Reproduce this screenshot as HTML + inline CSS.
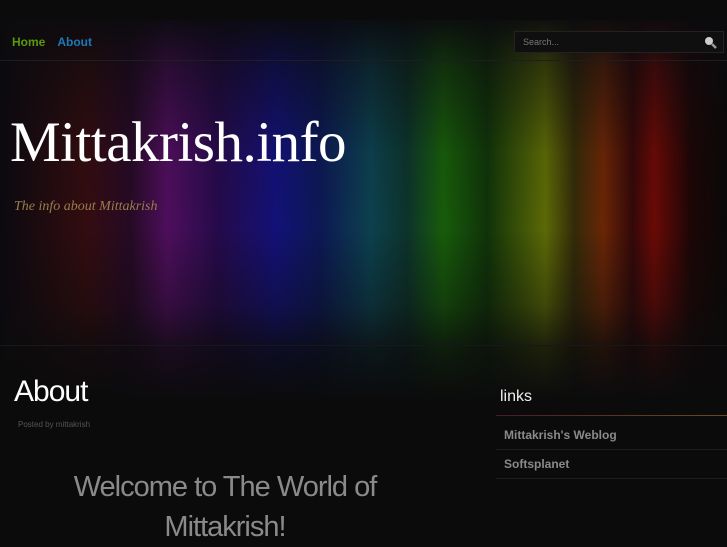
<!DOCTYPE html>
<html><head><meta charset="utf-8"><style>
html,body{margin:0;padding:0}
body{width:727px;height:545px;overflow:hidden;background:#0b0b0c;position:relative;font-family:"Liberation Sans",sans-serif}
.bg{position:absolute;left:0;top:20px;width:727px;height:380px;
background:linear-gradient(90deg,#0a0a10 0%,#3a0c10 12%,#2a0a2a 18%,#5a0f6a 23%,#2a0a55 30%,#14128a 38%,#0d1a60 44%,#0d4a5a 51%,#0d3a30 56%,#1a6a0a 61%,#103a08 67%,#6a7a05 75%,#3a3008 79%,#7a2a05 83%,#3a0808 87%,#7a0a05 90%,#200505 95%,#0a0808 100%)}
.fade{position:absolute;left:0;top:20px;width:727px;height:380px;
background:linear-gradient(180deg,rgba(11,11,14,.95) 0%,rgba(11,11,14,.6) 12%,rgba(11,11,12,.2) 35%,rgba(11,11,12,.15) 55%,rgba(11,11,12,.45) 75%,rgba(11,11,12,.8) 86%,rgba(11,11,12,1) 100%)}
.top{position:absolute;left:0;top:0;width:727px;height:20px;background:#0b0b0c}
.line{position:absolute;left:0;width:727px;height:1px;background:#1e1e22}
.nav{position:absolute;top:35px;left:12px;font-size:12px;font-weight:bold}
.nav span{margin-right:12px}
.search{position:absolute;left:514px;top:31px;width:210px;height:22px;border:1px solid #222;background:#0f0f10;box-sizing:border-box}
.search span{position:absolute;left:8px;top:5px;font-size:9px;color:#777}
h1{position:absolute;left:10px;top:110px;margin:0;font-family:"Liberation Serif",serif;font-weight:normal;font-size:57px;color:#fff;letter-spacing:-0.5px}
.tag{position:absolute;left:14px;top:199px;font-family:"Liberation Serif",serif;font-style:italic;font-size:14px;color:#9c7c4c}
.about{position:absolute;left:14px;top:375px;font-size:30px;color:#fff;letter-spacing:-1px}
.posted{position:absolute;left:18px;top:420px;font-size:8px;color:#555}
.welcome{position:absolute;left:40px;top:467px;width:370px;text-align:center;font-size:29px;line-height:40px;color:#8a8a8a;letter-spacing:-1px}
.links{position:absolute;left:500px;top:388px;font-size:16px;color:#eee}
.hr{position:absolute;left:496px;top:415px;width:231px;height:1px;background:linear-gradient(90deg,#4a1a2a,#6a4a20)}
.li{position:absolute;left:504px;font-size:12px;font-weight:bold;color:#8a8a8a}
.d{position:absolute;left:496px;width:231px;height:1px;background:#1d1d1d}
</style></head><body>
<div class="bg"></div><div class="fade"></div><div class="top"></div>
<div class="line" style="top:60px"></div>
<div class="line" style="top:345px;background:#18181c"></div>
<div class="nav"><span style="color:#5c9a0a">Home</span><span style="color:#1a7ab8">About</span></div>
<div class="search"><span>Search...</span>
<svg style="position:absolute;left:189px;top:4px" width="14" height="14" viewBox="0 0 14 14"><circle cx="5" cy="5" r="4" fill="#ccc"/><path d="M8 8 L12 12" stroke="#999" stroke-width="2.5"/></svg></div>
<h1>Mittakrish.info</h1>
<div class="tag">The info about Mittakrish</div>
<div class="about">About</div>
<div class="posted">Posted by mittakrish</div>
<div class="welcome">Welcome to The World of Mittakrish!</div>
<div class="links">links</div>
<div class="hr"></div>
<div class="li" style="top:428px">Mittakrish's Weblog</div>
<div class="d" style="top:449px"></div>
<div class="li" style="top:457px">Softsplanet</div>
<div class="d" style="top:478px"></div>
</body></html>
